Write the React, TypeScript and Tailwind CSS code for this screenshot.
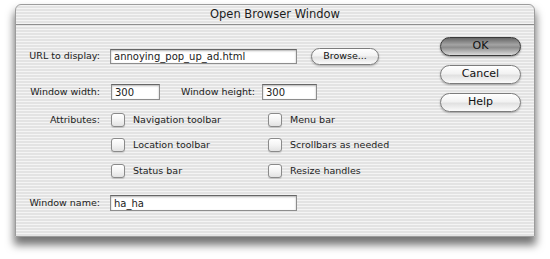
import React from "react";

const stripes =
  "bg-[repeating-linear-gradient(180deg,#f4f4f4_0px,#f4f4f4_1.5px,#e3e3e3_1.5px,#e3e3e3_3px)]";

function Field({ value, className }: { value: string; className: string }) {
  return (
    <div
      className={`flex items-center bg-white border border-[#8d8d8d] border-t-[#666] shadow-[inset_0_1px_2px_rgba(0,0,0,0.3)] pl-[3px] text-[10px] text-[#1a1a1a] ${className}`}
    >
      {value}
    </div>
  );
}

function Check({ label }: { label: string }) {
  return (
    <div className="flex items-center">
      <span className="w-[14px] h-[14px] rounded-[3px] border border-[#8a8a8a] bg-[linear-gradient(#ffffff,#f4f4f4_50%,#e2e2e2)] shadow-[0_1px_1px_rgba(0,0,0,0.15)]" />
      <span className="ml-[8px]">{label}</span>
    </div>
  );
}

function AquaButton({ label, primary }: { label: string; primary?: boolean }) {
  return (
    <div
      className={
        primary
          ? "h-[19px] rounded-full border border-[#3a3a3a] bg-[linear-gradient(#666,#a4a4a4_40%,#8c8c8c_55%,#dadada)] shadow-[0_1px_2px_rgba(0,0,0,0.4)] flex items-center justify-center text-[11px] text-[#111]"
          : "h-[19px] rounded-full border border-[#7c7c7c] bg-[linear-gradient(#ffffff,#f2f2f2_45%,#e1e1e1_55%,#fbfbfb)] shadow-[0_1px_2px_rgba(0,0,0,0.3)] flex items-center justify-center text-[11px] text-[#111]"
      }
    >
      {label}
    </div>
  );
}

export default function App() {
  return (
    <div className="w-[550px] h-[259px] bg-white pt-[4px] pl-[15px] font-['DejaVu_Sans',sans-serif]">
      {/* window */}
      <div
        className={`w-[520px] h-[233px] rounded-t-[6px] border border-[#9c9c9c] ${stripes} shadow-[0_7px_9px_1px_rgba(0,0,0,0.55)] flex flex-col`}
      >
        {/* title bar */}
        <div className="h-[20px] border-b border-[#8e8e8e] flex items-center justify-center text-[11.5px] text-[#1c1c1c]">
          Open Browser Window
        </div>

        <div className="flex flex-1 text-[9.5px] text-[#222]">
          {/* form */}
          <div className="flex-1 pt-[22px]">
            {/* URL */}
            <div className="h-[18px] flex items-center">
              <div className="w-[84px] text-right">URL to display:</div>
              <Field value="annoying_pop_up_ad.html" className="ml-[10px] w-[187px] h-[15px]" />
              <div className="ml-[14px] w-[68px] h-[17px] rounded-full border border-[#7c7c7c] bg-[linear-gradient(#ffffff,#f2f2f2_45%,#e1e1e1_55%,#fbfbfb)] shadow-[0_1px_2px_rgba(0,0,0,0.3)] flex items-center justify-center text-[9.5px] text-[#111]">
                Browse...
              </div>
            </div>

            {/* size */}
            <div className="h-[16px] mt-[19px] flex items-center">
              <div className="w-[84px] text-right">Window width:</div>
              <Field value="300" className="ml-[11px] w-[49px] h-[16px]" />
              <div className="ml-[21px]">Window height:</div>
              <Field value="300" className="ml-[7px] w-[55px] h-[16px]" />
            </div>

            {/* attributes */}
            <div className="h-[16px] mt-[12px] flex items-center">
              <div className="w-[84px] text-right">Attributes:</div>
              <div className="ml-[11px] w-[157px]">
                <Check label="Navigation toolbar" />
              </div>
              <Check label="Menu bar" />
            </div>
            <div className="h-[16px] mt-[9px] flex items-center">
              <div className="w-[84px]" />
              <div className="ml-[11px] w-[157px]">
                <Check label="Location toolbar" />
              </div>
              <Check label="Scrollbars as needed" />
            </div>
            <div className="h-[16px] mt-[10px] flex items-center">
              <div className="w-[84px]" />
              <div className="ml-[11px] w-[157px]">
                <Check label="Status bar" />
              </div>
              <Check label="Resize handles" />
            </div>

            {/* name */}
            <div className="h-[16px] mt-[16px] flex items-center">
              <div className="w-[84px] text-right">Window name:</div>
              <Field value="ha_ha" className="ml-[10px] w-[187px] h-[16px]" />
            </div>
          </div>

          {/* buttons */}
          <div className="w-[81px] mr-[13px] pt-[12px] flex flex-col gap-[9px]">
            <AquaButton label="OK" primary />
            <AquaButton label="Cancel" />
            <AquaButton label="Help" />
          </div>
        </div>
      </div>
    </div>
  );
}
